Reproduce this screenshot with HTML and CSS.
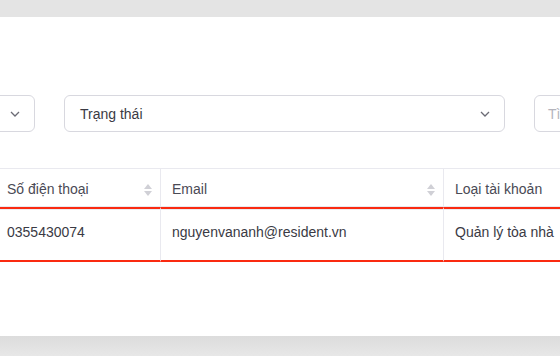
FILE: index.html
```html
<!DOCTYPE html>
<html lang="vi">
<head>
<meta charset="utf-8"/>
<meta content="width=device-width, initial-scale=1.0" name="viewport"/>
<title>Danh sách tài khoản</title>
<link rel="stylesheet" href="styles.css">
</head>
<body>
<div class="card">
  <div class="filters">
    <div class="select small">
      <span class="label"></span>
      <svg class="chevron" width="10" height="6" viewBox="0 0 10 6"><path d="M1 1l4 4 4-4" fill="none" stroke="#6b6b75" stroke-width="1.3"/></svg>
    </div>
    <div class="select wide">
      <span class="label">Trạng thái</span>
      <svg class="chevron" width="10" height="6" viewBox="0 0 10 6"><path d="M1 1l4 4 4-4" fill="none" stroke="#6b6b75" stroke-width="1.3"/></svg>
    </div>
    <div class="search">
      <span class="placeholder">Tìm kiếm</span>
    </div>
  </div>

  <table class="users">
    <thead>
      <tr>
        <th class="c-phone">Số điện thoại <span class="sort"></span></th>
        <th class="c-email">Email <span class="sort"></span></th>
        <th class="c-type">Loại tài khoản</th>
      </tr>
    </thead>
    <tbody>
      <tr class="selected">
        <td>0355430074</td>
        <td>nguyenvananh@resident.vn</td>
        <td>Quản lý tòa nhà</td>
      </tr>
    </tbody>
  </table>
</div>
</body>
</html>
```

FILE: styles.css
```css
html, body {
    margin: 0;
    padding: 0;
}

body {
    font-family: 'Liberation Sans', Arial, sans-serif;
    background: linear-gradient(#e4e4e4 0, #e4e4e4 320px, #dcdcdc 336px, #e7e7e7 356px);
    height: 356px;
    overflow: hidden;
    color: #3a3a44;
}

.card {
    background: #ffffff;
    margin: 17px 0 0 -100px;
    width: 900px;
    height: 319px;
    padding-top: 78px;
    box-sizing: border-box;
}

.filters {
    display: flex;
    gap: 29px;
    height: 37px;
}

.select, .search {
    border: 1px solid #d8d8df;
    border-radius: 6px;
    box-sizing: border-box;
    height: 37px;
    display: flex;
    align-items: center;
    padding: 0 14px 0 15px;
    font-size: 14px;
    flex-shrink: 0;
}

.select.small {
    width: 135px;
}

.select.wide {
    width: 441px;
}

.select .label {
    flex: 1;
    color: #3a3a44;
}

.chevron {
    display: block;
}

.search {
    width: 200px;
    padding-left: 13px;
}

.search .placeholder {
    color: #b4b4bc;
}

.users {
    margin-top: 36px;
    border-collapse: separate;
    border-spacing: 0;
    table-layout: fixed;
    font-size: 14px;
    width: 800px;
}

.users th {
    box-sizing: border-box;
    text-align: left;
    font-weight: normal;
    color: #4a4a55;
    height: 39px;
    padding: 3px 8px 0 11px;
    border-top: 1px solid #e9e9ef;
    border-right: 1px solid #e9e9ef;
    border-bottom: 1px solid #e9e9ef;
    position: relative;
}

.users th.c-phone {
    width: 261px;
    padding-left: 107px;
}

.users th.c-email {
    width: 283px;
}

.users th.c-type {
    border-right: none;
}

.sort {
    position: absolute;
    right: 8px;
    top: 15px;
    width: 8px;
    height: 12px;
}

.sort::before, .sort::after {
    content: "";
    position: absolute;
    left: 0;
    border-left: 4px solid transparent;
    border-right: 4px solid transparent;
}

.sort::before {
    top: 0;
    border-bottom: 5px solid #d0d0d6;
}

.sort::after {
    bottom: 0;
    border-top: 5px solid #d0d0d6;
}

.users td {
    height: 46px;
    padding: 0 8px 5px 11px;
    color: #3a3a44;
    border-right: 1px solid #e9e9ef;
    border-top: 2px solid #fa2a10;
    border-bottom: 2px solid #fa2a10;
    box-shadow: inset 0 1px 0 #ececf0;
    white-space: nowrap;
}

.users td:first-child {
    padding-left: 107px;
}

.users td:last-child {
    border-right: none;
}
```
